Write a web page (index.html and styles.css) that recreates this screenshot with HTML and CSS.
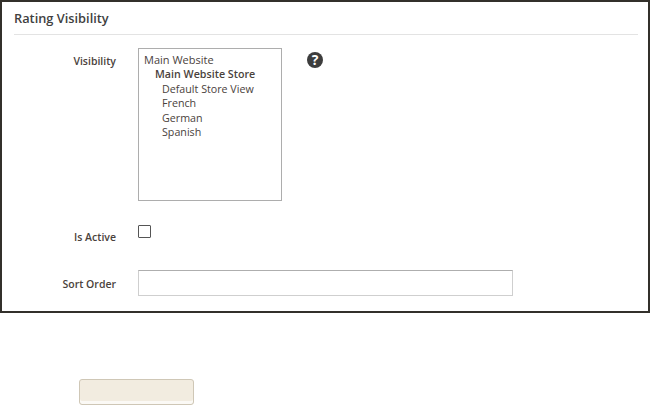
FILE: index.html
```html
<!DOCTYPE html>
<html lang="en">
<head>
  <meta charset="UTF-8">
  <title>Rating Visibility</title>
  <link rel="stylesheet" href="styles.css">
</head>
<body>

  <div class="panel">
    <h2 class="panel-title">Rating Visibility</h2>

    <div class="row row-visibility">
      <div class="label">Visibility</div>
      <div class="store-list">
        <div class="store-site">Main Website</div>
        <div class="store-group">Main Website Store</div>
        <div class="store-view">Default Store View</div>
        <div class="store-view">French</div>
        <div class="store-view">German</div>
        <div class="store-view">Spanish</div>
      </div>
      <span class="help">?</span>
    </div>

    <div class="row row-active">
      <div class="label">Is Active</div>
      <span class="checkbox"></span>
    </div>

    <div class="row row-sort">
      <div class="label">Sort Order</div>
      <div class="text-input"></div>
    </div>
  </div>

  <div class="button"></div>

</body>
</html>
```

FILE: styles.css
```css
* {
  box-sizing: border-box;
  margin: 0;
  padding: 0;
}

body {
  font-family: 'Open Sans', sans-serif;
  background-color: #fff;
  color: #333;
  font-size: 10.7px;
  width: 651px;
  height: 406px;
  overflow: hidden;
}

.panel {
  width: 650px;
  height: 313px;
  border: 2px solid #33302b;
  padding: 0 10px 0 12px;
}

.panel-title {
  font-size: 12.8px;
  font-weight: 600;
  line-height: 16px;
  padding-top: 8px;
  height: 33px;
  border-bottom: 1px solid #e3e3e3;
  color: #3f3f3f;
}

.row {
  display: flex;
}

.label {
  width: 102px;
  margin-right: 22px;
  text-align: right;
  font-weight: 600;
  font-size: 10.5px;
  color: #4a423c;
  line-height: 14px;
}

/* Visibility */
.row-visibility {
  margin-top: 13px;
}

.row-visibility .label {
  padding-top: 6px;
}

.store-list {
  width: 144px;
  height: 153px;
  border: 1px solid #adadad;
  padding: 4px 5px;
  line-height: 14.4px;
  color: #4a423c;
}

.store-site {
  font-size: 11px;
}

.store-group {
  padding-left: 11px;
  font-weight: 600;
}

.store-view {
  padding-left: 18px;
}

.help {
  width: 16px;
  height: 16px;
  margin: 4px 0 0 25px;
  border-radius: 50%;
  background-color: #3d3d3d;
  color: #fff;
  font-size: 14px;
  font-weight: 700;
  line-height: 16px;
  text-align: center;
}

/* Is Active */
.row-active {
  margin-top: 24px;
}

.row-active .label {
  padding-top: 5px;
}

.checkbox {
  width: 13px;
  height: 13px;
  border: 1px solid #555;
  border-radius: 1px;
}

/* Sort Order */
.row-sort {
  margin-top: 26px;
}

.row-sort .label {
  padding-top: 7px;
}

.text-input {
  width: 375px;
  height: 26px;
  border: 1px solid #cfcfcf;
  border-top-color: #aeaeae;
}

.button {
  width: 115px;
  height: 26px;
  margin: 66px 0 0 79px;
  background-color: #f2ece0;
  border: 1px solid #cfc7b6;
  border-radius: 3px;
  box-shadow: inset 0 -3px 0 #fbf9f5;
}
```
